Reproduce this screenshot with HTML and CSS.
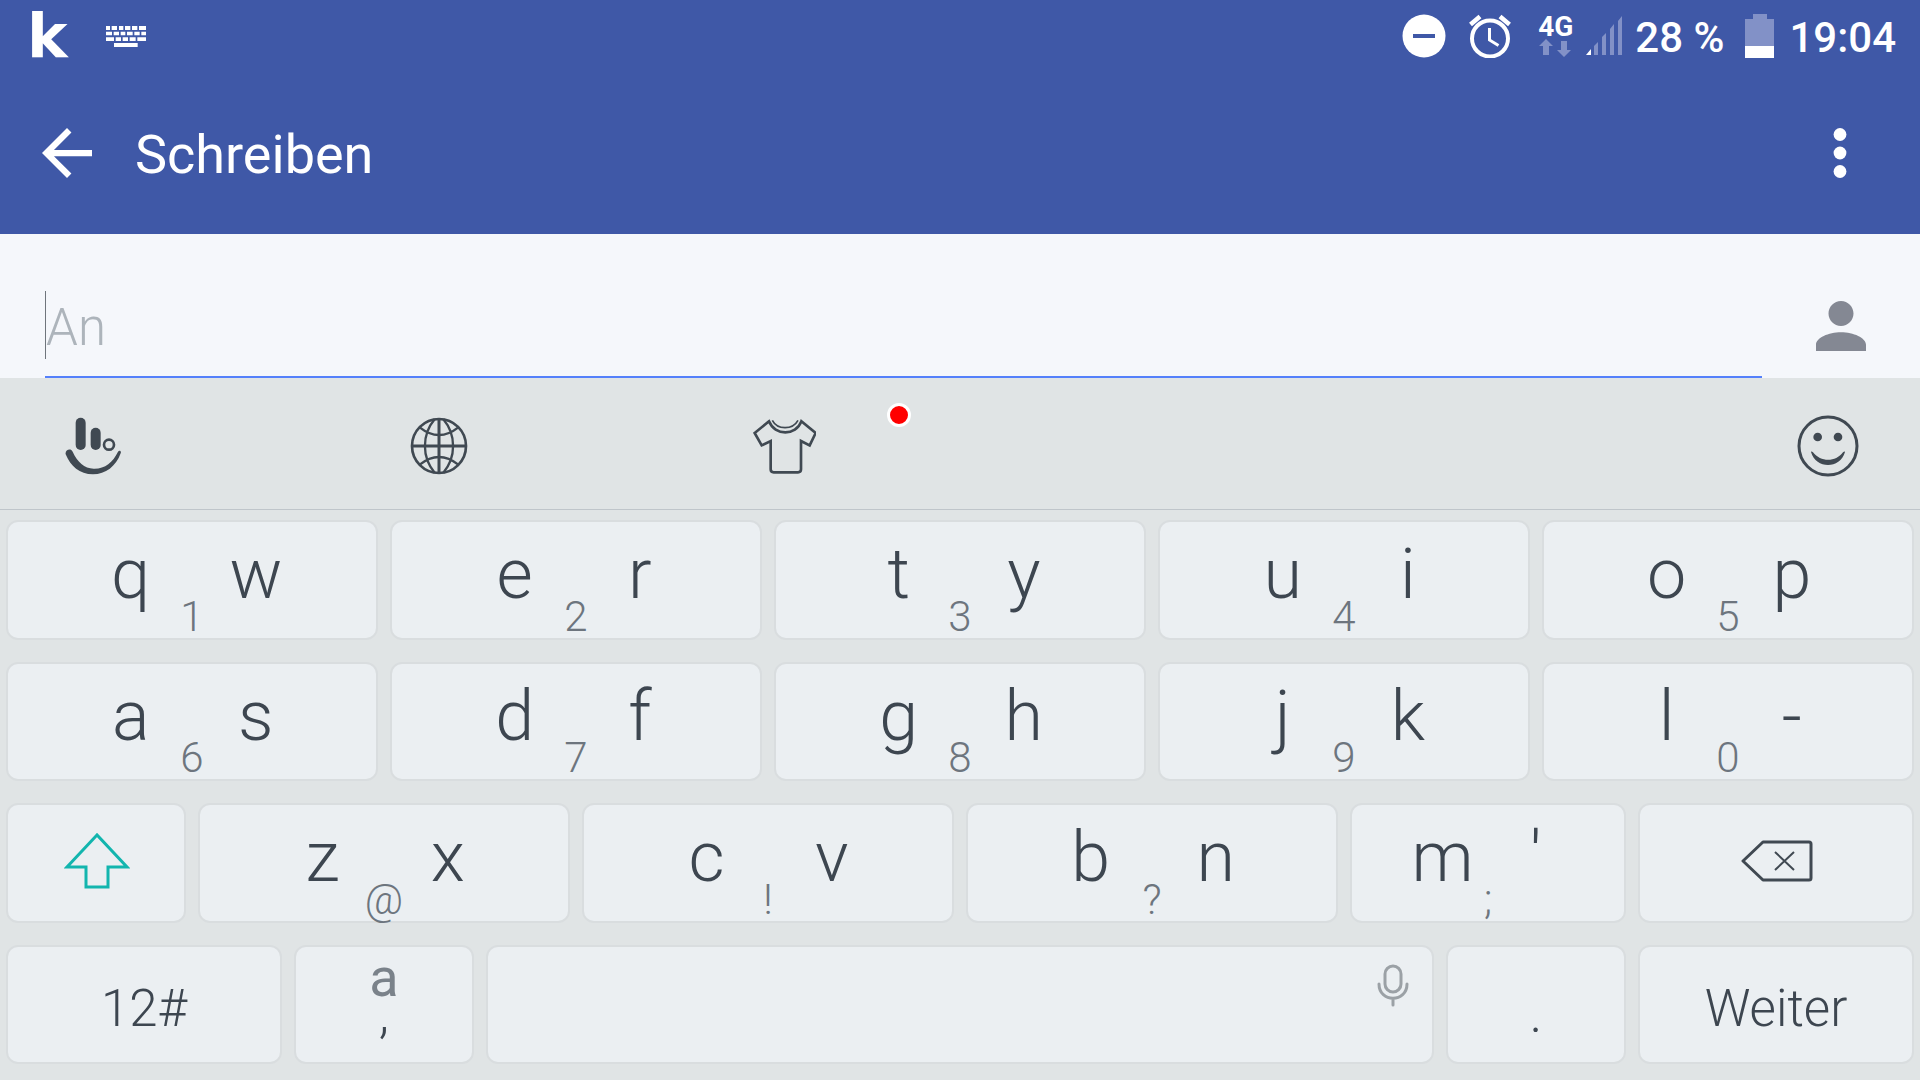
FILE: index.html
```html
<!DOCTYPE html>
<html lang="de">
<head>
<meta charset="UTF-8" />
<meta name="viewport" content="width=device-width, initial-scale=1" />
<title>Schreiben</title>
<link rel="stylesheet" href="styles.css">
</head>
<body>
  <div class="status-bar">
    <span class="app-logo">k</span>
    <svg class="status-keyboard" width="40" height="21" viewBox="0 0 120 63" aria-hidden="true">
      <path d="M0 0h12v12H0zM17 0h16v12H17zM39 0h13v12H39zM57 0h16v12H57zM78 0h16v12H78zM99 0h21v12H99zM0 17h18v11H0zM23 17h16v11H23zM44 17h14v11H44zM63 17h17v11H63zM85 17h16v11H85zM106 17h14v11h-14zM0 34h24v11H0zM29 34h16v11H29zM50 34h16v11H50zM71 34h18v11H71zM94 34h26v11H94zM24 51h71v12H24z" fill="#fff"/>
    </svg>
    <div class="status-right">
      <svg width="44" height="44" viewBox="0 0 44 44" aria-hidden="true">
        <circle cx="22" cy="22" r="21.5" fill="#fff"/>
        <path d="M11 20h22v4H11z" fill="#3f58a7"/>
      </svg>
      <svg class="alarm" width="44" height="44" viewBox="0 0 44 44" fill="none" stroke="#fff" aria-hidden="true">
        <circle cx="22" cy="24.500" r="18" stroke-width="4"/>
        <path d="M2.500 10.500L12 2.500M41.500 10.500L32 2.500" stroke-width="4.500"/>
        <path d="M21.500 14v12l9 5.500" stroke-width="3"/>
      </svg>
      <div class="network">
        <span>4G</span>
        <svg width="34" height="18" viewBox="0 0 34 18" fill="#8291c7" aria-hidden="true">
          <path d="M8 0l7 7h-4v9H5V7H1zM26 18l-7-7h4V2h6v9h4z"/>
        </svg>
      </div>
      <svg class="signal" width="38" height="40" viewBox="0 0 38 40" aria-hidden="true">
        <path d="M1 39l5-6v6z" fill="#fff"/>
        <path d="M9 39V30l4-4v13zM17 39V21l4-4v22zM25 39V13l4-5v31zM33 39V5l4-5v39z" fill="#8291c7"/>
      </svg>
      <span class="status-text">28 %</span>
      <svg class="battery" width="30" height="44" viewBox="0 0 30 44" aria-hidden="true">
        <path d="M8 0h14v5h7v27H0V5h8z" fill="#8291c7"/>
        <path d="M0 32h29v12H0z" fill="#fff"/>
      </svg>
      <time class="status-text" datetime="19:04">19:04</time>
    </div>
  </div>

  <header class="app-bar">
    <button class="icon-button" type="button" aria-label="Zurück">
      <svg width="50" height="50" viewBox="4 4 16 16" fill="#fff" aria-hidden="true">
        <path d="M20 11H7.830l5.590-5.590L12 4l-8 8 8 8 1.410-1.410L7.830 13H20v-2z"/>
      </svg>
    </button>
    <h1>Schreiben</h1>
    <button class="icon-button menu" type="button" aria-label="Weitere Optionen">
      <svg width="14" height="50" viewBox="0 0 14 50" fill="#fff" aria-hidden="true">
        <circle cx="7" cy="6.500" r="6.400"/><circle cx="7" cy="25" r="6.400"/><circle cx="7" cy="43.500" r="6.400"/>
      </svg>
    </button>
  </header>

  <main class="compose">
    <div class="recipient">
      <input type="text" id="to" placeholder="An" aria-label="An">
    </div>
    <button class="icon-button" type="button" aria-label="Kontakt wählen">
      <svg width="50" height="50" viewBox="4 4 16 16" fill="#848893" aria-hidden="true">
        <path d="M12 12c2.210 0 4-1.790 4-4s-1.790-4-4-4-4 1.790-4 4 1.790 4 4 4zm0 2c-4 0-8 1.800-8 4v2h16v-2c0-2.200-4-4-8-4z"/>
      </svg>
    </button>
  </main>

  <section class="keyboard">
    <div class="toolbar">
      <div class="tools">
        <button class="icon-button" type="button" aria-label="TouchPal">
          <svg width="56" height="58" viewBox="0 0 168 174" fill="#404952" aria-hidden="true">
            <rect x="32" y="2" width="30" height="97" rx="15"/>
            <rect x="77" y="32" width="30" height="67" rx="15"/>
            <circle cx="132" cy="83" r="15" fill="none" stroke="#404952" stroke-width="8"/>
            <path d="M2 112C-1 99 17 92 23 104C37 135 58 154 86 155C119 156 143 137 159 104C163 99 170 102 167 109C153 148 122 172 84 172C43 172 17 148 2 112z"/>
          </svg>
        </button>
        <button class="icon-button" type="button" aria-label="Sprache">
          <svg width="58" height="58" viewBox="0 0 174 174" fill="none" stroke="#404952" stroke-width="8" aria-hidden="true">
            <circle cx="87" cy="87" r="81"/>
            <path d="M87 6v162M6 87h162" stroke-width="9"/>
            <path d="M74 7C35 53 35 121 74 167M100 7C139 53 139 121 100 167M29 31Q87 77 145 31M29 143Q87 97 145 143" stroke-width="7"/>
          </svg>
        </button>
        <button class="icon-button" type="button" aria-label="Designs">
          <svg width="64" height="56" viewBox="-3 -3 192 168" fill="none" stroke="#404952" stroke-width="8" aria-hidden="true">
            <path d="M48 7L5 42L26 79L53 66V151Q53 160 62 160H135Q144 160 144 151V66L170 79L188 42L145 7C129 51 65 51 48 7z"/>
            <path d="M58 4C73 33 119 33 135 4" stroke-width="5"/>
          </svg>
          <span class="badge"></span>
        </button>
      </div>
      <button class="icon-button" type="button" aria-label="Emoji">
        <svg width="62" height="62" viewBox="0 0 186 186" fill="#404952" aria-hidden="true">
          <circle cx="93" cy="93" r="87" fill="none" stroke="#404952" stroke-width="9"/>
          <circle cx="62" cy="66" r="13"/><circle cx="123" cy="66" r="13"/>
          <path d="M42 111C57 163 129 163 144 111C145 108 140 109 138 112C116 142 71 142 48 112C46 109 41 108 42 111z"/>
        </svg>
      </button>
    </div>

    <div class="keys">
      <button class="key pair" type="button"><span>q</span><span>w</span><small>1</small></button>
      <button class="key pair" type="button"><span>e</span><span>r</span><small>2</small></button>
      <button class="key pair" type="button"><span>t</span><span>y</span><small>3</small></button>
      <button class="key pair" type="button"><span>u</span><span>i</span><small>4</small></button>
      <button class="key pair" type="button"><span>o</span><span>p</span><small>5</small></button>

      <button class="key pair" type="button"><span>a</span><span>s</span><small>6</small></button>
      <button class="key pair" type="button"><span>d</span><span>f</span><small>7</small></button>
      <button class="key pair" type="button"><span>g</span><span>h</span><small>8</small></button>
      <button class="key pair" type="button"><span>j</span><span>k</span><small>9</small></button>
      <button class="key pair" type="button"><span>l</span><span>-</span><small>0</small></button>

      <button class="key symbol narrow" type="button" aria-label="Umschalttaste">
        <svg width="66" height="58" viewBox="0 0 66 58" fill="none" stroke="#12b5ae" stroke-width="3" aria-hidden="true">
          <path d="M33 3L3 35H22V55H44V35H63z"/>
        </svg>
      </button>
      <button class="key pair" type="button"><span>z</span><span>x</span><small>@</small></button>
      <button class="key pair" type="button"><span>c</span><span>v</span><small>!</small></button>
      <button class="key pair" type="button"><span>b</span><span>n</span><small>?</small></button>
      <button class="key pair medium" type="button"><span>m</span><span>'</span><small>;</small></button>
      <button class="key symbol medium" type="button" aria-label="Löschen">
        <svg width="72" height="42" viewBox="0 0 72 42" fill="none" stroke="#404952" stroke-width="3" stroke-linejoin="round" aria-hidden="true">
          <path d="M2 21L22 2H68Q70 2 70 4V38Q70 40 68 40H22z"/>
          <path d="M34 12L53 30M53 12L34 30" stroke-width="2"/>
        </svg>
      </button>

      <button class="key label medium" type="button">12#</button>
      <button class="key comma narrow" type="button"><span class="mode">a</span><span>,</span></button>
      <button class="key space" type="button" aria-label="Leertaste">
        <svg width="32" height="43" viewBox="0 0 32 43" fill="none" stroke="#9ba1a6" stroke-width="3" stroke-linecap="round" aria-hidden="true">
          <rect x="8" y="2" width="16" height="26" rx="8"/>
          <path d="M2 20C2 39 30 39 30 20M16 35v6"/>
        </svg>
      </button>
      <button class="key comma narrow" type="button"><span>.</span></button>
      <button class="key label medium" type="button">Weiter</button>
    </div>
  </section>
</body>
</html>
```
FILE: styles.css
```css
:root {
  --primary: #3f58a7;
  --surface: #f5f7fb;
  --board: #e0e4e5;
  --key: #ebeff2;
  --key-border: #d9dddf;
  --ink: #3d4650;
  --ink-soft: #6d757e;
}
* {
  box-sizing: border-box;
}
body {
  margin: 0;
  min-height: 100vh;
  display: flex;
  flex-direction: column;
  font-family: Roboto, "Liberation Sans", sans-serif;
  background: var(--board);
}
button {
  font: inherit;
  color: inherit;
  padding: 0;
  border: 0;
  background: none;
  cursor: pointer;
}
svg {
  display: block;
}

/* Status bar */
.status-bar {
  display: flex;
  align-items: center;
  height: 72px;
  padding: 0 24px 0 27px;
  background: var(--primary);
  color: #fff;
  font-size: 42px;
  font-weight: 500;
}
.app-logo {
  width: 79px;
  font-family: "DejaVu Sans", sans-serif;
  font-size: 61px;
  font-weight: 700;
  line-height: 72px;
}
.status-right {
  display: flex;
  align-items: center;
  margin-left: auto;
  line-height: 48px;
}
.status-text {
  padding-top: 4px;
}
.alarm {
  margin-left: 22px;
}
.network {
  margin: 0 12px 0 26px;
  font-size: 28px;
  font-weight: 700;
  line-height: 24px;
}
.network span {
  display: block;
}
.signal {
  margin-right: 12px;
}
.battery {
  margin: 0 14px 0 21px;
}

/* App bar */
.app-bar {
  display: flex;
  align-items: center;
  height: 162px;
  padding: 0 73px 0 42px;
  background: var(--primary);
  color: #fff;
}
.app-bar h1 {
  margin: 0 0 0 43px;
  padding-top: 4px;
  font-size: 54px;
  font-weight: 400;
  line-height: 64px;
}
.menu {
  margin-left: auto;
}

/* Recipient */
.compose {
  display: flex;
  align-items: center;
  gap: 54px;
  padding: 57px 54px 0 45px;
  background: var(--surface);
}
.recipient {
  flex: 1;
  padding-bottom: 17px;
  border-bottom: 2px solid #5480fb;
}
.recipient input {
  display: block;
  width: 100%;
  height: 68px;
  padding: 4px 0 0;
  border: 0;
  border-left: 1px solid #6f757c;
  outline: 0;
  background: none;
  font: 300 51px Roboto, sans-serif;
  color: var(--ink);
}
.recipient input::placeholder {
  color: #adb4bb;
  opacity: 1;
}
.compose .icon-button {
  margin-bottom: 18px;
}

/* Keyboard */
.keyboard {
  flex: 1;
  display: flex;
  flex-direction: column;
}
.toolbar {
  display: flex;
  align-items: center;
  justify-content: space-between;
  height: 132px;
  padding: 4px 61px 0;
  border-bottom: 1px solid #bfc5ca;
}
.tools {
  display: grid;
  grid-auto-flow: column;
  grid-auto-columns: 18vw;
}
.tools .icon-button {
  position: relative;
  display: flex;
  align-items: center;
  justify-content: center;
  width: 64px;
  height: 64px;
}
.badge {
  position: absolute;
  left: 135px;
  top: -11px;
  width: 24px;
  height: 24px;
  border: 3px solid #fff;
  border-radius: 50%;
  background: #f00;
}
.keys {
  flex: 1;
  display: grid;
  grid-template-columns: repeat(20, minmax(0, 1fr));
  grid-auto-rows: 1fr;
  gap: 22px 12px;
  padding: 10px 6px 16px;
  color: var(--ink);
  font-weight: 300;
}
.key {
  grid-column: span 4;
  border: 2px solid var(--key-border);
  border-radius: 12px;
  background: var(--key);
}
.key.narrow {
  grid-column: span 2;
}
.key.medium {
  grid-column: span 3;
}
.key.space {
  grid-column: span 10;
}
.pair {
  display: grid;
  grid-template-columns: repeat(6, 1fr);
  font-size: 70px;
  line-height: 72px;
}
.pair span {
  grid-row: 1;
  grid-column: 2 / span 2;
  padding-top: 16px;
}
.pair span + span {
  grid-column: 4 / span 2;
  padding-left: 5px;
}
.pair small {
  grid-row: 1;
  grid-column: 3 / span 2;
  align-self: end;
  font-size: 42px;
  line-height: 42px;
  color: var(--ink-soft);
}
.symbol {
  display: flex;
  align-items: center;
  justify-content: center;
  padding: 0 0 4px 2px;
}
.label {
  padding-top: 8px;
  font-size: 51px;
}
.comma {
  display: flex;
  flex-direction: column;
  align-items: center;
  justify-content: flex-end;
  padding-bottom: 30px;
  font-size: 54px;
  line-height: 36px;
}
.comma .mode {
  font-weight: 400;
  color: #7a828a;
}
.space {
  display: flex;
  justify-content: flex-end;
  align-items: flex-start;
  padding: 17px 23px;
}
```
